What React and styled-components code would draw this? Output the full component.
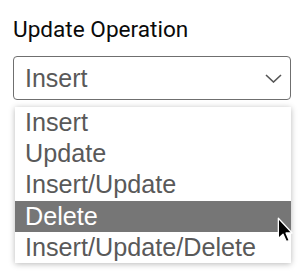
import React from "react";
import styled, { createGlobalStyle } from "styled-components";

const Global = createGlobalStyle`
  html, body { margin: 0; padding: 0; background: #fff; }
  body { font-family: "Liberation Sans", Arial, sans-serif; }
`;

const Wrap = styled.div`
  width: 304px;
  height: 280px;
  box-sizing: border-box;
  padding: 17px 13px 0 13px;
  display: flex;
  flex-direction: column;
`;

const Label = styled.div`
  font-family: Roboto, "Liberation Sans", sans-serif;
  font-size: 22.6px;
  line-height: 25px;
  color: #0a0a0a;
  margin-bottom: 14px;
`;

const Select = styled.div`
  box-sizing: border-box;
  width: 278px;
  height: 44px;
  border: 1px solid #6f6f6f;
  border-radius: 4px;
  display: flex;
  align-items: center;
  justify-content: space-between;
  padding: 0 8px 0 11px;
  font-size: 25px;
  color: #595959;
`;

const List = styled.ul`
  position: relative;
  list-style: none;
  margin: 7px 0 0 2px;
  padding: 0;
  width: 276px;
  background: #fff;
  box-shadow: 0 1px 6px rgba(0, 0, 0, 0.28);
`;

const Item = styled.li`
  height: 31.2px;
  display: flex;
  align-items: center;
  padding-left: 10px;
  font-size: 25.2px;
  color: ${(p) => (p.$active ? "#fff" : "#595959")};
  background: ${(p) => (p.$active ? "#767676" : "transparent")};
`;

const Cursor = styled.svg`
  position: absolute;
  left: 262px;
  top: 110px;
`;

const options = ["Insert", "Update", "Insert/Update", "Delete", "Insert/Update/Delete"];

export default function App() {
  return (
    <>
      <Global />
      <Wrap>
        <Label>Update Operation</Label>
        <Select role="combobox" aria-expanded="true">
          <span>Insert</span>
          <svg width="17" height="9" viewBox="0 0 17 9">
            <polyline points="1,1 8.5,8 16,1" fill="none" stroke="#555" strokeWidth="1.6" />
          </svg>
        </Select>
        <List role="listbox">
          {options.map((o) => (
            <Item key={o} $active={o === "Delete"} role="option">
              {o}
            </Item>
          ))}
          <Cursor width="17" height="26" viewBox="0 0 13 20">
            <path
              d="M1,1 L1,16.5 L4.6,13.2 L7.2,19 L9.4,18 L6.9,12.3 L11.6,12.3 Z"
              fill="#000"
              stroke="#fff"
              strokeWidth="1"
              strokeLinejoin="round"
            />
          </Cursor>
        </List>
      </Wrap>
    </>
  );
}
